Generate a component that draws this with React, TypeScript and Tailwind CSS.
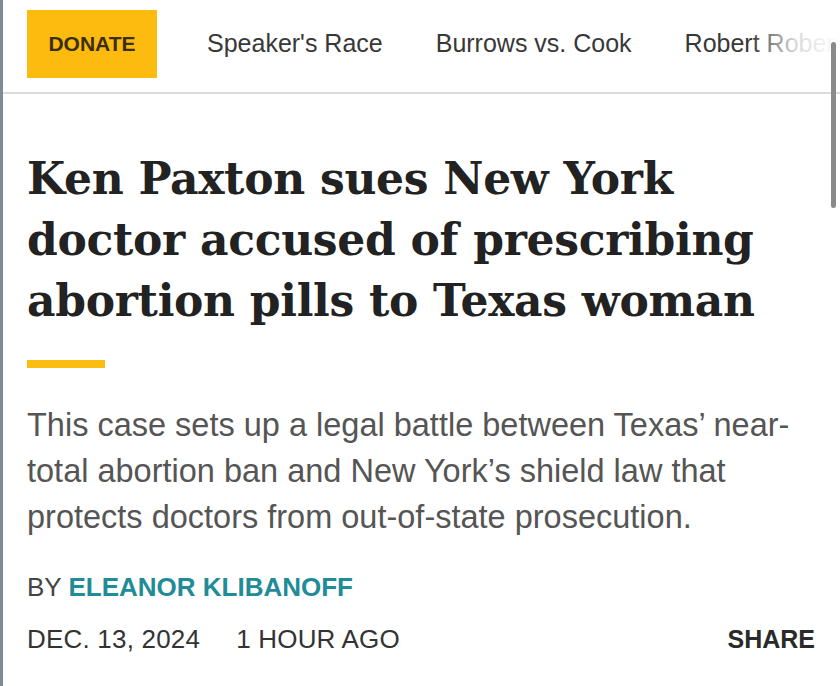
export default function App() {
  return (
    <div className="relative w-[840px] h-[686px] overflow-hidden bg-white border-l-[3px] border-[#7d8c8e] font-['Liberation_Sans',Arial,sans-serif]">
      <nav className="relative h-[94px] flex items-start border-b-2 border-[#dcdcdc] whitespace-nowrap">
        <a
          href="#"
          className="shrink-0 mt-[10px] ml-[24px] w-[130px] h-[68px] bg-[#fdbb10] flex items-center justify-center text-[#3b2e0c] font-bold text-[21px]"
        >
          DONATE
        </a>
        <div className="flex items-center gap-[53px] ml-[50px] h-[88px] text-[25px] text-[#383838]">
          <a href="#">Speaker's Race</a>
          <a href="#">Burrows vs. Cook</a>
          <a href="#">Robert Roberts</a>
        </div>
        <div className="absolute right-0 top-0 h-[88px] w-[90px] bg-gradient-to-r from-white/0 via-white/80 to-white" />
      </nav>

      <div className="absolute right-[4px] top-[42px] w-[5px] h-[166px] rounded-full bg-[#8a8a8a]" />

      <main className="px-[24px] pt-[54px]">
        <h1 className="font-['DejaVu_Serif',Georgia,serif] font-bold text-[44px] leading-[61px] text-[#222] tracking-[-0.3px]">
          Ken Paxton sues New York doctor accused of prescribing abortion pills to Texas woman
        </h1>

        <div className="mt-[29px] w-[78px] h-[8px] bg-[#fbbd12]" />

        <p className="mt-[34px] text-[32.5px] leading-[46px] text-[#555]">
          This case sets up a legal battle between Texas’ near-
          <br />
          total abortion ban and New York’s shield law that
          <br />
          protects doctors from out-of-state prosecution.
        </p>

        <div className="mt-[32px] text-[26px] leading-[30px] uppercase text-[#444]">
          BY <span className="font-bold text-[#1f8c97]">Eleanor Klibanoff</span>
        </div>

        <div className="mt-[22px] flex items-center text-[26px] leading-[30px] text-[#333] tracking-[0.2px] pr-[1px]">
          <span>DEC. 13, 2024</span>
          <span className="ml-[36px]">1 HOUR AGO</span>
          <a href="#" className="ml-auto font-bold text-[25px] text-[#2a2a2a] tracking-normal">
            SHARE
          </a>
        </div>
      </main>
    </div>
  );
}
